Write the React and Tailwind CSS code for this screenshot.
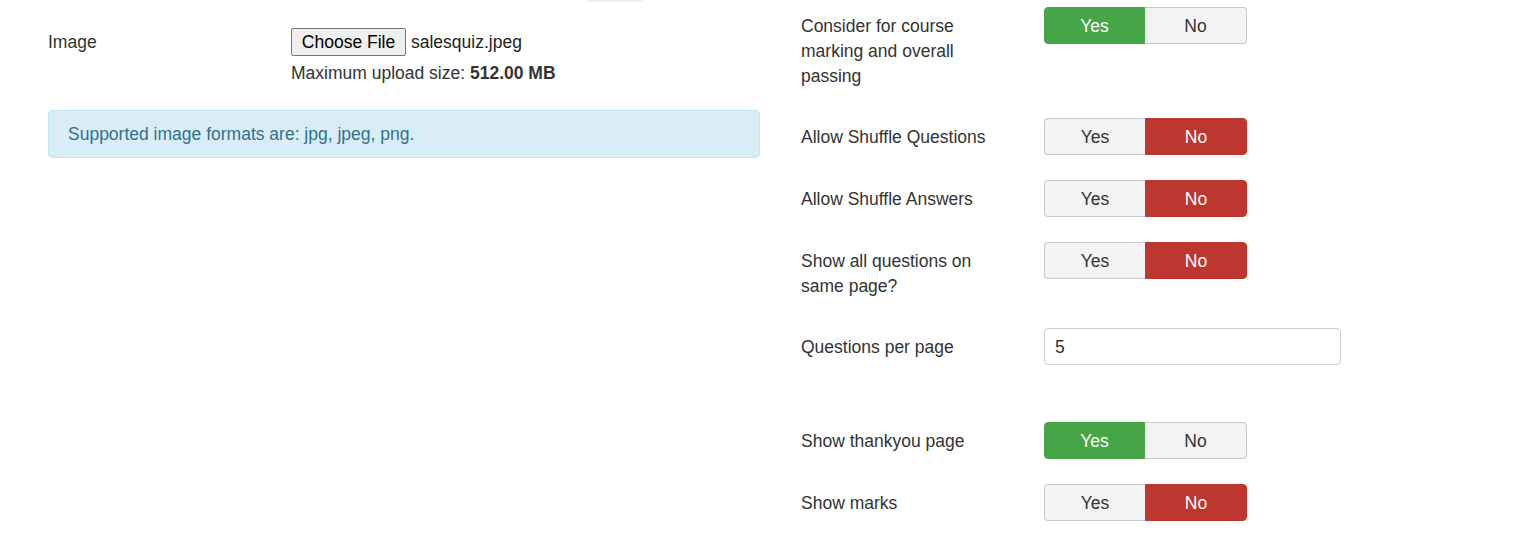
import React from "react";

function Toggle({ yes }) {
  const base = "flex items-center justify-center h-full pt-[2px]";
  return (
    <div className="flex h-[37px] w-[203px] shrink-0 text-[17.5px]">
      <div
        className={
          yes
            ? `${base} w-[101px] rounded-l-[4px] bg-[#46a546] border border-[#46a546] text-white`
            : `${base} w-[101px] rounded-l-[4px] bg-[#f3f3f3] border border-r-0 border-[#c8c8c8] text-[#333]`
        }
      >
        Yes
      </div>
      <div
        className={
          yes
            ? `${base} w-[102px] rounded-r-[4px] bg-[#f3f3f3] border border-l-0 border-[#c8c8c8] text-[#333]`
            : `${base} w-[102px] rounded-r-[4px] bg-[#bd362f] border border-[#bd362f] text-white`
        }
      >
        No
      </div>
    </div>
  );
}

function Row({ label, children, mb = "mb-[25px]" }) {
  return (
    <div className={`flex ${mb}`}>
      <div className="w-[243px] shrink-0">
        <div className="w-[200px] pt-[7px] pb-[4px]">{label}</div>
      </div>
      {children}
    </div>
  );
}

export default function App() {
  return (
    <div className="w-[1516px] h-[541px] bg-white overflow-hidden font-['Liberation_Sans',Arial,sans-serif] text-[17.5px] leading-[25px] text-[#333]">
      <div className="ml-[586px] w-[57px] h-[2px] rounded-b-[3px] bg-[#f1f1f1]" />
      <div className="flex pt-[5px]">
        {/* Left column */}
        <div className="ml-[48px] w-[712px] pt-[21px]">
          <div className="flex">
            <div className="w-[243px] shrink-0 pt-[2px]">Image</div>
            <div>
              <div className="flex items-center h-[28px]">
                <button className="h-[28px] w-[115px] bg-[#efefef] border border-[#767676] rounded-[2px] text-[17.5px] text-black leading-none pt-[1px]">
                  Choose File
                </button>
                <span className="ml-[5px] text-[17.5px] text-[#222] pt-[1px]">salesquiz.jpeg</span>
              </div>
              <div className="mt-[5px]">
                Maximum upload size: <span className="font-bold">512.00 MB</span>
              </div>
            </div>
          </div>
          <div className="mt-[24px] h-[48px] rounded-[4px] bg-[#d9edf7] border border-[#bce8f1] text-[#31708f] pl-[19px] pt-[1px] flex items-center">
            Supported image formats are: jpg, jpeg, png.
          </div>
        </div>

        {/* Right column */}
        <div className="ml-[41px] w-[700px]">
          <Row label="Consider for course marking and overall passing">
            <Toggle yes />
          </Row>
          <Row label="Allow Shuffle Questions">
            <Toggle yes={false} />
          </Row>
          <Row label="Allow Shuffle Answers">
            <Toggle yes={false} />
          </Row>
          <Row label="Show all questions on same page?">
            <Toggle yes={false} />
          </Row>
          <Row label="Questions per page" mb="mb-[57px]">
            <div className="w-[297px] h-[37px] border border-[#cccccc] rounded-[4px] px-[10px] pt-[1px] flex items-center bg-white">
              5
            </div>
          </Row>
          <Row label="Show thankyou page">
            <Toggle yes />
          </Row>
          <Row label="Show marks">
            <Toggle yes={false} />
          </Row>
        </div>
      </div>
    </div>
  );
}
